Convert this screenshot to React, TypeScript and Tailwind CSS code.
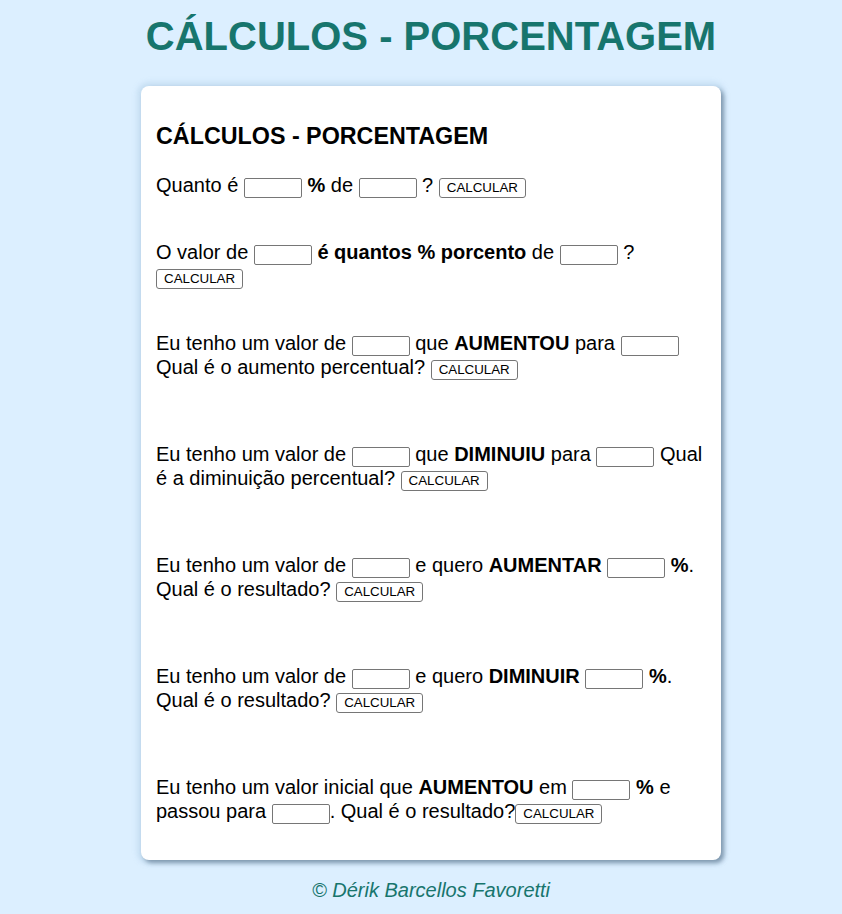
import React from "react";

const Inp = () => (
  <input
    type="text"
    className="inline-block w-[58px] h-[20px] -my-[4px] border border-[#767676] rounded-[2px] bg-white text-[13.333px] align-baseline px-[2px] outline-none"
  />
);

const Btn = () => (
  <button className="inline-block h-[20px] -my-[4px] px-[7px] border border-[#767676] rounded-[3px] bg-white text-[13.333px] leading-[15px] text-black align-baseline">
    CALCULAR
  </button>
);

export default function App() {
  return (
    <div
      className="min-h-screen bg-[#dcefff] pl-[20px] pt-[13px] text-black"
      style={{ fontFamily: '"Liberation Sans", Arial, sans-serif' }}
    >
      <h1 className="text-center text-[40px] leading-[46px] font-bold text-[#17756d]">
        CÁLCULOS - PORCENTAGEM
      </h1>
      <div className="mx-auto mt-[27px] w-[580px] rounded-[8px] bg-white px-[15px] pt-[37px] pb-[37px] shadow-[3px_3px_4px_rgba(70,95,120,0.55),0_0_5px_4px_rgba(160,195,220,0.35)]">
        <h2 className="text-[23.3px] leading-[26px] font-bold">CÁLCULOS - PORCENTAGEM</h2>
        <div className="text-[20px] leading-[24px]">
          <p className="mt-[24px]">
            Quanto é <Inp /> <b>%</b> de <Inp /> ? <Btn />
          </p>
          <p className="mt-[43px]">
            O valor de <Inp /> <b>é quantos % porcento</b> de <Inp /> ? <Btn />
          </p>
          <p className="mt-[43px]">
            Eu tenho um valor de <Inp /> que <b>AUMENTOU</b> para <Inp /> Qual é o aumento
            percentual? <Btn />
          </p>
          <p className="mt-[63px]">
            Eu tenho um valor de <Inp /> que <b>DIMINUIU</b> para <Inp /> Qual é a diminuição
            percentual? <Btn />
          </p>
          <p className="mt-[63px]">
            Eu tenho um valor de <Inp /> e quero <b>AUMENTAR</b> <Inp /> <b>%</b>. Qual é o
            resultado? <Btn />
          </p>
          <p className="mt-[63px]">
            Eu tenho um valor de <Inp /> e quero <b>DIMINUIR</b> <Inp /> <b>%</b>. Qual é o
            resultado? <Btn />
          </p>
          <p className="mt-[63px]">
            Eu tenho um valor inicial que <b>AUMENTOU</b> em <Inp /> <b>%</b> e passou para{" "}
            <Inp />. Qual é o resultado?
            <Btn />
          </p>
        </div>
      </div>
      <p className="mt-[19px] pb-[14px] text-center text-[20px] leading-[23px] italic text-[#17756d]">
        © Dérik Barcellos Favoretti
      </p>
    </div>
  );
}
